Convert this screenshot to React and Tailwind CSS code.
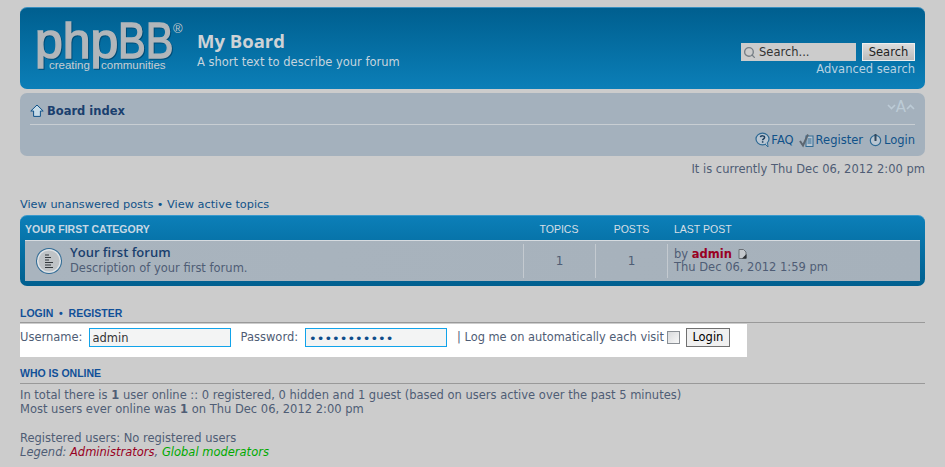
import { Search } from 'lucide-react';

const verdana = "font-['DejaVu_Sans',Verdana,sans-serif]";

function Logo() {
  return (
    <div className="relative w-[152px] h-[66px] shrink-0">
      <span className="absolute left-0 top-[-7px] text-[50px] leading-[60px] whitespace-nowrap font-['Liberation_Sans',sans-serif] text-[#b2b6ba] [-webkit-text-stroke:1.5px_#b2b6ba] drop-shadow-[1px_1px_0_#004d78]">
        php<span className="inline-block origin-left scale-x-[.83]">BB</span>
      </span>
      <span className="absolute left-[138px] top-[4px] text-[13px] leading-[13px] text-[#c4c8cc] font-['Liberation_Sans',sans-serif]">®</span>
      <span className="absolute left-[14px] top-[41px] text-[11.5px] leading-[13px] text-[#c9ced2] font-['Liberation_Sans',sans-serif] whitespace-nowrap">
        creating
      </span>
      <span className="absolute left-[66px] top-[41px] text-[11.5px] leading-[13px] text-[#c9ced2] font-['Liberation_Sans',sans-serif] whitespace-nowrap">
        communities
      </span>
    </div>
  );
}

function HomeIcon() {
  return (
    <svg width="14" height="14" viewBox="0 0 14 14" className="shrink-0">
      <path d="M7 1 L13.2 7 H10.4 V12.4 H3.6 V7 H0.8 Z" fill="#c6dbe8" stroke="#105289" strokeWidth="1" strokeLinejoin="round" />
    </svg>
  );
}

function FaqIcon() {
  return (
    <svg width="16" height="16" viewBox="0 0 16 16" className="shrink-0">
      <ellipse cx="7.5" cy="7" rx="6.5" ry="5.8" fill="#b9c6d2" stroke="#2f6a94" strokeWidth="1.2" />
      <path d="M10 12 L13 15 L12.5 10.5" fill="#b9c6d2" stroke="#2f6a94" strokeWidth="1" />
      <path d="M5.4 5.2 C5.6 3.4 9.6 3.4 9.6 5.4 C9.6 6.8 7.6 6.8 7.6 8.3" fill="none" stroke="#1d3f5e" strokeWidth="1.5" />
      <rect x="6.9" y="9.2" width="1.5" height="1.5" fill="#1d3f5e" />
    </svg>
  );
}

function RegisterIcon() {
  return (
    <svg width="15" height="15" viewBox="0 0 15 15" className="shrink-0">
      <rect x="7" y="3" width="7" height="10.5" fill="#b9c6d2" stroke="#2f6a94" strokeWidth="1" />
      <path d="M8.5 6H12.5M8.5 8H12.5M8.5 10H12.5" stroke="#2f6a94" strokeWidth="1" />
      <path d="M1 8 L4 12.5 L9 1.5" fill="none" stroke="#5c6670" strokeWidth="2" />
    </svg>
  );
}

function PowerIcon() {
  return (
    <svg width="13" height="14" viewBox="0 0 13 14" className="shrink-0">
      <circle cx="6.5" cy="7.5" r="5.2" fill="#b9c6d2" stroke="#2f6a94" strokeWidth="1.2" />
      <rect x="5.5" y="1" width="2" height="7" fill="#33485c" />
    </svg>
  );
}

function ForumIcon() {
  return (
    <svg width="28" height="28" viewBox="0 0 28 28" className="shrink-0">
      <circle cx="14" cy="14" r="13" fill="#2f6a94" />
      <circle cx="14" cy="14" r="12" fill="#dfe3e6" />
      <circle cx="14" cy="14" r="10.5" fill="#bfc3c6" />
      <path d="M10 8H14M10 10.5H16M10 13H14M10 15.5H18M10 18H16M10 20.5H18" stroke="#33383c" strokeWidth="1.2" />
    </svg>
  );
}

function PostIcon() {
  return (
    <svg width="9" height="10" viewBox="0 0 9 10" className="shrink-0 -mt-[2px]">
      <path d="M1 .5H5.5L8 3V9.5H1Z" fill="#c4c8cc" stroke="#6b7076" strokeWidth="1" />
      <path d="M4 9.5L8.5 5V9.5Z" fill="#2b2f33" />
    </svg>
  );
}

function Chevron({ up }) {
  return (
    <svg width="9" height="6" viewBox="0 0 9 6" className="shrink-0">
      <path d={up ? 'M1 5L4.5 1.5L8 5' : 'M1 1L4.5 4.5L8 1'} fill="none" stroke="#bccbd6" strokeWidth="1.6" />
    </svg>
  );
}

export default function App() {
  return (
    <div className={`min-h-[467px] bg-[#cccccc] px-5 pt-[7px] text-[11.5px] leading-[14px] text-[#4f5d75] overflow-hidden ${verdana}`}>
      {/* Header */}
      <header className="h-[82px] rounded-[7px] border-t border-[#3a8fbf] bg-gradient-to-b from-[#005f8f] to-[#0c7fb8] flex justify-between pl-[15px] pr-[10px]">
        <div className="flex pt-[10px]">
          <Logo />
          <div className="ml-[10px] pt-[11px]">
            <h1 className="text-[18.5px] leading-[24px] font-bold text-[#cdd2d6] font-['Open_Sans',sans-serif]">My Board</h1>
            <p className="leading-[14px] mt-[2px] text-[#c6d4de]">A short text to describe your forum</p>
          </div>
        </div>
        <div className="flex flex-col items-end pt-[35px]">
          <div className="flex items-center gap-[6px]">
            <div className="w-[115px] h-[18px] bg-[#cccccc] flex items-center pl-[2px] gap-[3px] text-[#333333]">
              <Search size={13} strokeWidth={2.5} className="text-[#777f86]" />
              <span>Search...</span>
            </div>
            <button className="w-[53px] h-[18px] bg-gradient-to-b from-[#dddddd] to-[#bbbbbb] border border-[#eeeeee] text-[11.5px] leading-[14px] text-[#222222]">Search</button>
          </div>
          <a className="leading-[14px] mt-[1px] text-[#b8d2e2] whitespace-nowrap">Advanced search</a>
        </div>
      </header>

      {/* Nav */}
      <nav className="mt-[4px] h-[63px] rounded-[7px] bg-[#a4b1bd] px-[10px]">
        <div className="h-[32px] border-b border-[#c8ced3] flex items-center justify-between pt-[5px]">
          <div className="flex items-center gap-[3px] font-bold text-[#1a3f6e] text-[11.5px]">
            <HomeIcon />
            <span>Board index</span>
          </div>
          <div className="flex items-center mt-[-9px] text-[#bccbd6] leading-[14px] text-[15px]">
            <Chevron />
            <span>A</span>
            <Chevron up />
          </div>
        </div>
        <div className="flex justify-end items-center pt-[7px] leading-[16px] text-[#105289]">
          <span className="flex items-center"><FaqIcon />FAQ</span>
          <span className="flex items-center ml-[5px]"><RegisterIcon /><span className="ml-[2px]">Register</span></span>
          <span className="flex items-center ml-[6px]"><PowerIcon /><span className="ml-[2px]">Login</span></span>
        </div>
      </nav>

      <p className="text-right mt-[6px]">It is currently Thu Dec 06, 2012 2:00 pm</p>

      <p className="mt-[22px] text-[#105289] text-[11.3px]">View unanswered posts • View active topics</p>

      {/* Forum list */}
      <section className="mt-[3px] rounded-[7px] border-t border-[#3a99cc] bg-gradient-to-b from-[#0c7fb8] to-[#005f8f] px-[5px] pb-[5px] h-[71px]">
        <div className="flex h-[24px] pt-[1px] items-center text-[#d6dfe6] uppercase font-['Liberation_Sans',sans-serif] text-[10.5px]">
          <span className="w-[498px] font-bold text-[#c8d8e4]">Your first category</span>
          <span className="w-[72px] text-center">Topics</span>
          <span className="w-[73px] text-center">Posts</span>
          <span className="ml-[6px]">Last post</span>
        </div>
        <div className="h-[41px] bg-gradient-to-r from-[#a9b4be] to-[#a6b1bb] border-t border-[#d6dbe0] flex py-[3px]">
          <div className="w-[498px] flex items-center pl-[10px] gap-[7px]">
            <ForumIcon />
            <div>
              <div className="text-[13px] leading-[15px] font-semibold text-[#1a3f6e] font-['Open_Sans',sans-serif] -mt-[1px]">Your first forum</div>
              <div className="leading-[15px] mt-[1px]">Description of your first forum.</div>
            </div>
          </div>
          <div className="w-[72px] border-l border-[#c4cad0] flex items-center justify-center text-[12px]">1</div>
          <div className="w-[73px] border-l border-[#c4cad0] border-r flex items-center justify-center text-[12px]">1</div>
          <div className="pl-[6px] pt-[4px] leading-[13px]">
            <div className="flex items-center gap-[6px]">
              <span>by <b className="text-[#990022]">admin</b></span>
              <PostIcon />
            </div>
            <div>Thu Dec 06, 2012 1:59 pm</div>
          </div>
        </div>
      </section>

      {/* Login */}
      <h3 className="mt-[20px] h-[17px] border-b border-[#999999] text-[10.5px] leading-[14px] font-bold text-[#115098] font-['Liberation_Sans',sans-serif] uppercase">Login &nbsp;•&nbsp; Register</h3>
      <form className="mt-[1px] w-[727px] h-[33px] bg-white flex items-start pt-[4px] whitespace-nowrap">
        <span className="mt-[2px]">Username:</span>
        <input readOnly value="admin" className="ml-[6px] w-[142px] h-[19px] border border-[#11a3ea] bg-[#f3f4f4] px-[3px] pt-[1px] text-[11.5px] text-[#333333] outline-none" />
        <span className="ml-[10px] mt-[2px]">Password:</span>
        <input readOnly type="password" value="passwordabc" className="ml-[7px] w-[142px] h-[19px] border border-[#11a3ea] bg-[#f3f4f4] px-[3px] pt-[1px] text-[13px] text-[#0f4d8a] outline-none" />
        <span className="ml-[10px] mt-[2px] text-[11.4px]">| Log me on automatically each visit</span>
        <span className="ml-[3px] mt-[3px] w-[13px] h-[13px] border border-[#8a8f94] bg-gradient-to-br from-[#d8dadc] to-[#f8f8f8]"></span>
        <button type="button" className="ml-[6px] w-[44px] h-[19px] border border-[#707070] bg-[#f0f0f0] text-[11.5px] leading-[15px] text-black">Login</button>
      </form>

      {/* Who is online */}
      <h3 className="mt-[9px] h-[18px] border-b border-[#999999] text-[10.5px] leading-[14px] font-bold text-[#115098] font-['Liberation_Sans',sans-serif] uppercase">Who is online</h3>
      <p className="mt-[4px]">In total there is <b>1</b> user online :: 0 registered, 0 hidden and 1 guest (based on users active over the past 5 minutes)</p>
      <p>Most users ever online was <b>1</b> on Thu Dec 06, 2012 2:00 pm</p>
      <p className="mt-[15px]">Registered users: No registered users</p>
      <p className="italic">Legend: <span className="text-[#990022]">Administrators</span>, <span className="text-[#00aa00]">Global moderators</span></p>
    </div>
  );
}
